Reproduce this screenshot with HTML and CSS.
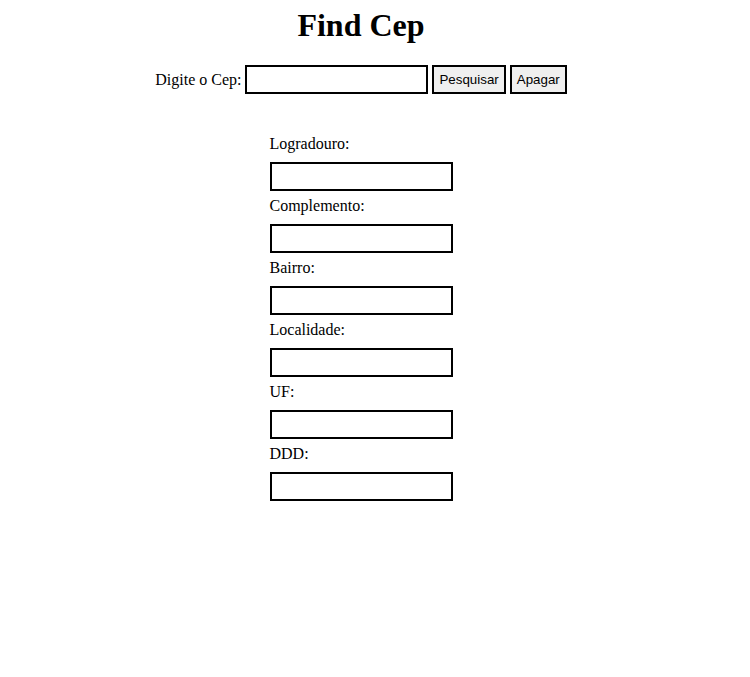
FILE: index.html
```html
<!DOCTYPE html>
<html lang="pt-BR">
<head>
<meta charset="utf-8">
<title>Find Cep</title>
<link rel="stylesheet" href="styles.css">
</head>
<body>
<div class="page">
  <h1 class="title">Find Cep</h1>
  <div class="search">
    <label class="search-label" for="cep">Digite o Cep:</label>
    <input class="field" id="cep" type="text">
    <button class="btn" type="button">Pesquisar</button>
    <button class="btn" type="button">Apagar</button>
  </div>
  <div class="results">
    <label class="res-label">Logradouro:</label>
    <input class="field" type="text">
    <label class="res-label">Complemento:</label>
    <input class="field" type="text">
    <label class="res-label">Bairro:</label>
    <input class="field" type="text">
    <label class="res-label">Localidade:</label>
    <input class="field" type="text">
    <label class="res-label">UF:</label>
    <input class="field" type="text">
    <label class="res-label">DDD:</label>
    <input class="field" type="text">
  </div>
</div>
</body>
</html>
```
FILE: styles.css
```css
html, body {
  margin: 0;
  padding: 0;
  background: #fff;
}
body {
  font-family: "Liberation Serif", "Times New Roman", serif;
  font-size: 16px;
  color: #000;
}
.page {
  width: 722px;
  padding-top: 7px;
  display: flex;
  flex-direction: column;
  align-items: center;
}
.title {
  margin: 0;
  font-size: 32px;
  font-weight: bold;
  line-height: 37px;
}
.search {
  margin-top: 21px;
  display: flex;
  align-items: center;
  gap: 4px;
}
.search-label {
  line-height: 18px;
}
.field {
  box-sizing: border-box;
  width: 183px;
  height: 29px;
  border: 2px solid #000;
  background: #fff;
  margin: 0;
  padding: 1px 2px;
  font-family: "Liberation Sans", Arial, sans-serif;
  font-size: 13.333px;
  outline: none;
}
.btn {
  box-sizing: border-box;
  height: 29px;
  margin: 0;
  padding: 1px 5px;
  border: 2px solid #000;
  background: #efefef;
  color: #000;
  font-family: "Liberation Sans", Arial, sans-serif;
  font-size: 13.333px;
}
.results {
  margin-top: 41px;
  width: 183px;
  display: flex;
  flex-direction: column;
}
.res-label {
  line-height: 18px;
  margin-bottom: 9px;
}
.results .field {
  margin-bottom: 6px;
}
```
